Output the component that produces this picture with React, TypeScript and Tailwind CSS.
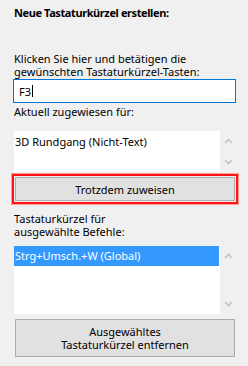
import React from "react"

function Chevron({ up }: { up?: boolean }) {
  return (
    <svg width="9" height="6" viewBox="0 0 9 6" className="block">
      <polyline
        points={up ? "1,5 4.5,1.5 8,5" : "1,1 4.5,4.5 8,1"}
        fill="none"
        stroke="#c3c3c3"
        strokeWidth="1.6"
      />
    </svg>
  )
}

function ScrollStrip() {
  return (
    <div className="w-[16px] flex flex-col items-center justify-between py-[7px] bg-[#f0f0f0]">
      <Chevron up />
      <Chevron />
    </div>
  )
}

export default function App() {
  return (
    <div
      className="w-[248px] h-[366px] bg-[#f0f0f0] text-black text-[11px] leading-[13px] pl-[14px] overflow-hidden"
      style={{ fontFamily: '"Noto Sans", "Open Sans", sans-serif' }}
    >
      <div className="pt-[6px] font-bold tracking-[-0.4px]">Neue Tastaturkürzel erstellen:</div>

      <div className="mt-[33px]">
        Klicken Sie hier und betätigen die
        <br />
        gewünschten Tastaturkürzel-Tasten:
      </div>

      <div className="mt-[1px] -ml-[1px] w-[223px] h-[24px] bg-white border border-[#0078d7] flex items-center pl-[5px]">
        <span>F3</span>
        <span className="inline-block w-[1px] h-[12px] bg-black ml-[1px]" />
      </div>

      <div className="mt-[2px]">Aktuell zugewiesen für:</div>

      <div className="mt-[13px] w-[222px] h-[41px] flex">
        <div className="flex-1 bg-white pl-[1px] pt-[4px]">3D Rundgang (Nicht-Text)</div>
        <ScrollStrip />
      </div>

      <div className="mt-[2px] -ml-[2px] w-[226px] h-[30px] border-2 border-[#ff1414] shadow-[0_0_0_1px_#ff9c9c] p-[1px]">
        <button className="w-full h-full bg-[#e1e1e1] border border-[#adadad] flex items-center justify-center">
          Trotzdem zuweisen
        </button>
      </div>

      <div className="mt-[8px]">
        Tastaturkürzel für
        <br />
        ausgewählte Befehle:
      </div>

      <div className="mt-[8px] w-[222px] h-[68px] flex">
        <div className="flex-1 bg-white">
          <div className="h-[20px] mr-[1px] bg-[#3399ff] text-white pl-[1px] pt-[3px]">
            Strg+Umsch.+W (Global)
          </div>
        </div>
        <ScrollStrip />
      </div>

      <button className="mt-[5px] ml-[1px] w-[220px] h-[38px] bg-[#e1e1e1] border border-[#adadad] flex flex-col items-center justify-center text-center">
        <span>Ausgewähltes</span>
        <span>Tastaturkürzel entfernen</span>
      </button>
    </div>
  )
}
